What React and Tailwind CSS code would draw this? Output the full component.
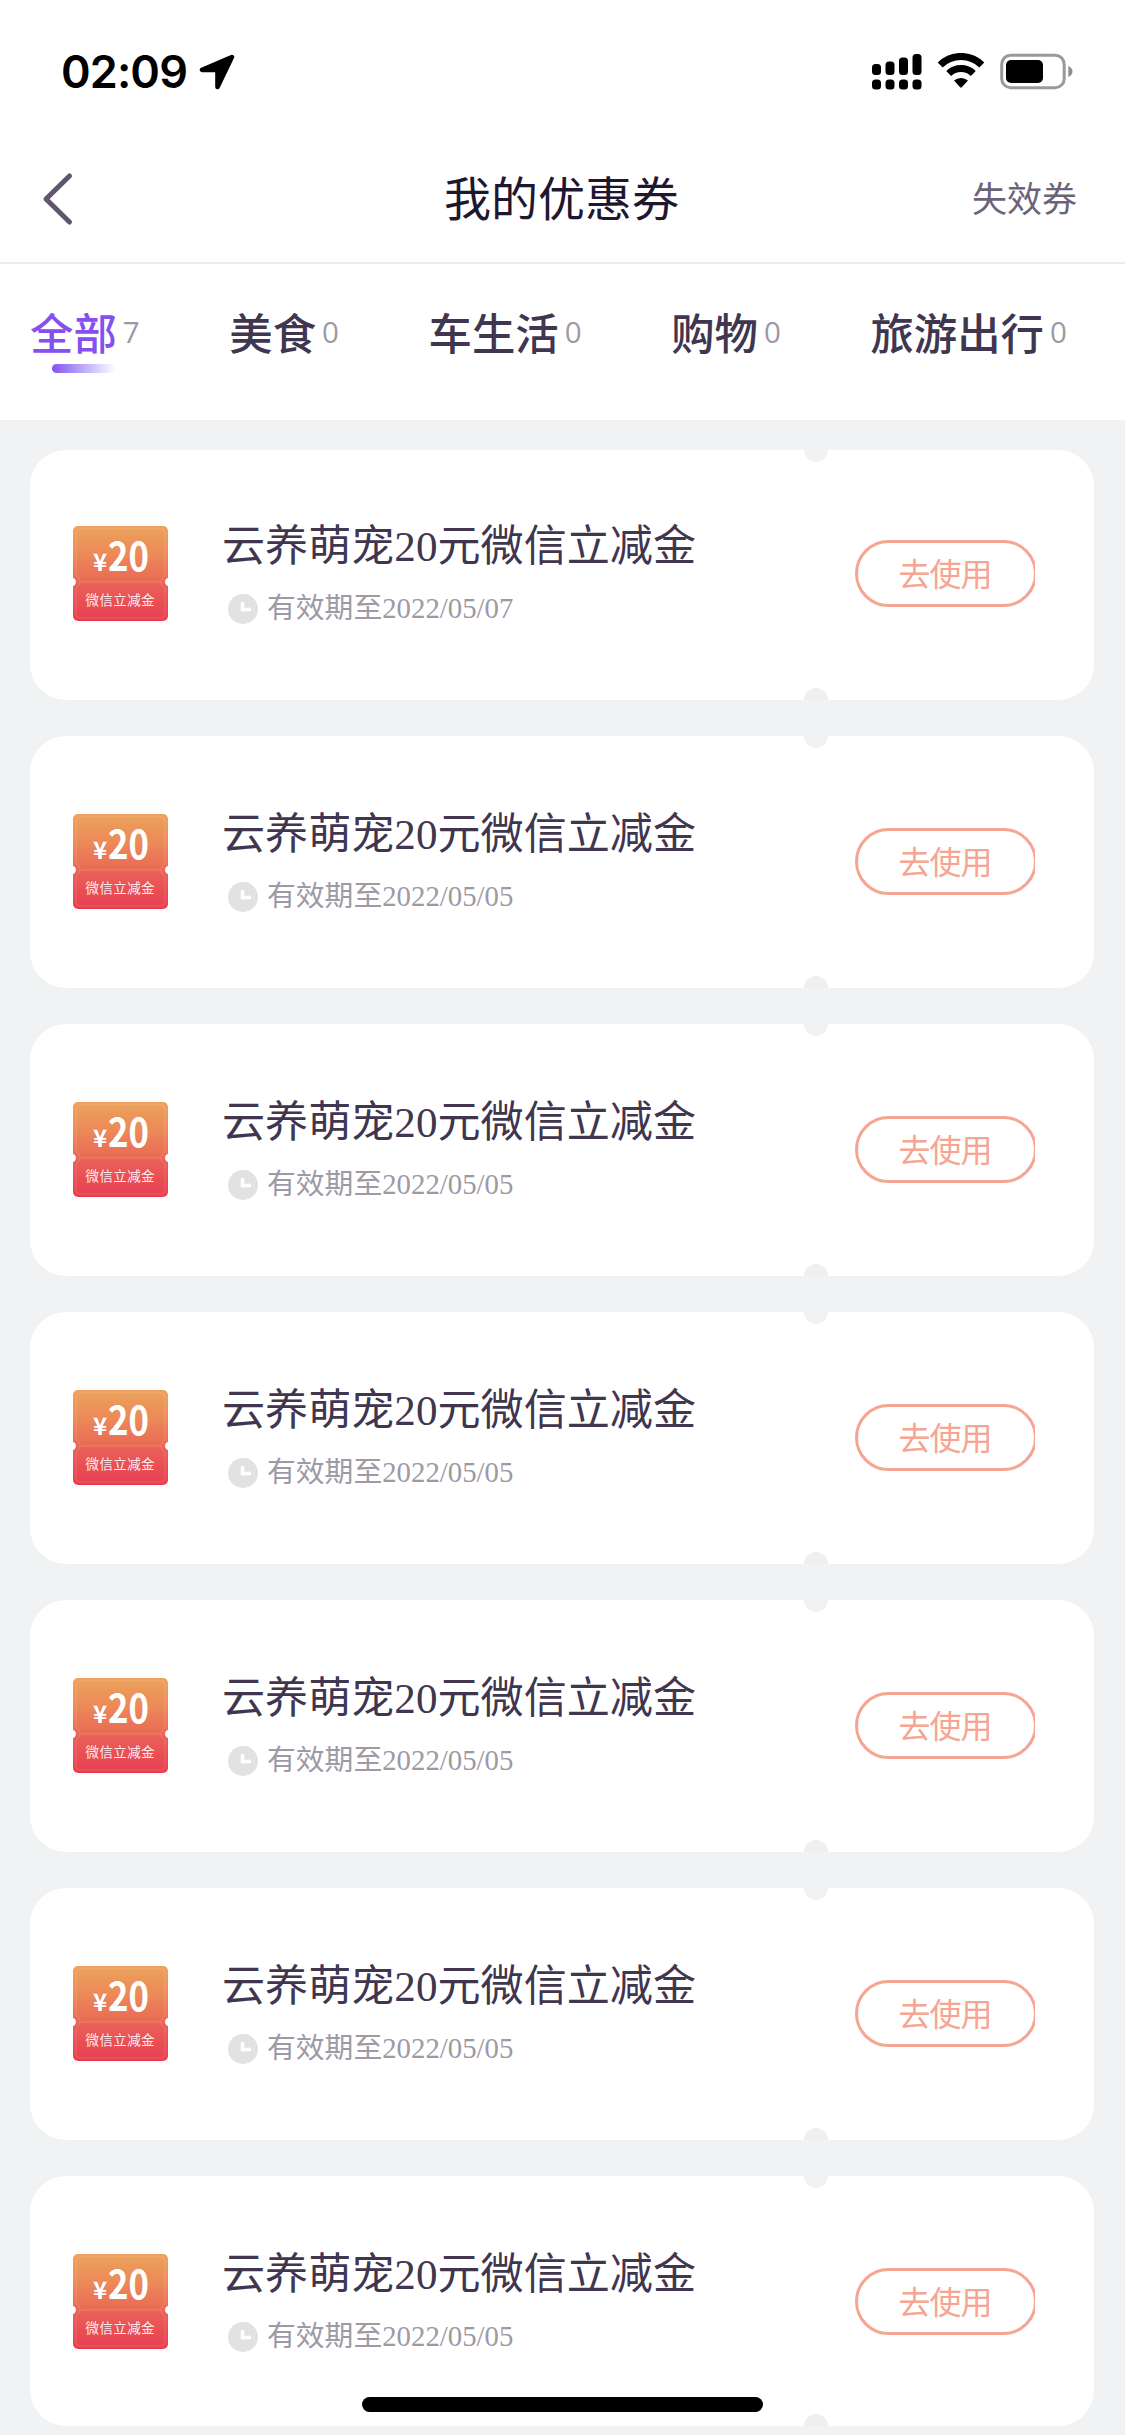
const tabs = [
  { label: '全部', count: 7, active: true },
  { label: '美食', count: 0 },
  { label: '车生活', count: 0 },
  { label: '购物', count: 0 },
  { label: '旅游出行', count: 0 },
]

const coupons = [
  { id: 1, expires: '2022/05/07' },
  { id: 2, expires: '2022/05/05' },
  { id: 3, expires: '2022/05/05' },
  { id: 4, expires: '2022/05/05' },
  { id: 5, expires: '2022/05/05' },
  { id: 6, expires: '2022/05/05' },
  { id: 7, expires: '2022/05/05' },
]

function StatusBar() {
  return (
    <div className="h-[136px] pl-[61px] pr-[52px] pt-[43px] flex items-start justify-between">
      <div className="flex items-center h-[57px]">
        <span className="font-['Inter',sans-serif] font-semibold text-[45px] leading-[57px] tracking-[-0.9px] text-black w-[138px] whitespace-nowrap">02:09</span>
        <svg width="36" height="36" viewBox="0 0 35 35" className="block">
          <path d="M32 3 L3 15.5 H18 V32 Z" fill="#000" stroke="#000" strokeWidth="4.5" strokeLinejoin="round" />
        </svg>
      </div>
      <div className="flex items-start pt-[10px]">
        <svg width="50" height="37" viewBox="0 0 50 37" className="block">
          <rect x="0" y="11" width="9" height="11" rx="3.5" />
          <rect x="13.5" y="8.5" width="9" height="13.5" rx="3.5" />
          <rect x="27" y="4.5" width="9" height="17.5" rx="3.5" />
          <rect x="40.5" y="1" width="9" height="21" rx="3.5" />
          <rect x="0" y="26.5" width="9" height="10" rx="3.5" />
          <rect x="13.5" y="26.5" width="9" height="10" rx="3.5" />
          <rect x="27" y="26.5" width="9" height="10" rx="3.5" />
          <rect x="40.5" y="26.5" width="9" height="10" rx="3.5" />
        </svg>
        <svg width="48" height="36" viewBox="0 0 48 36" className="block ml-[15px]">
          <path d="M3.2 12 A29.5 29.5 0 0 1 44.8 12" fill="none" stroke="#000" strokeWidth="7" />
          <path d="M11.7 20.5 A17.8 17.8 0 0 1 36.3 20.5" fill="none" stroke="#000" strokeWidth="7" />
          <path d="M17 27.6 A10.5 10.5 0 0 1 31 27.6 L24.8 34.3 Q24 35 23.2 34.3 Z" />
        </svg>
        <svg width="73" height="37" viewBox="0 0 73 37" className="block ml-[15px]">
          <rect x="1.7" y="2.2" width="62.5" height="32.5" rx="9" fill="none" stroke="#999" strokeWidth="3" />
          <rect x="6" y="7" width="37" height="23" rx="5" />
          <path d="M68.3 13 Q72.5 15 72.5 18.5 Q72.5 22 68.3 24 Z" fill="#8d8d8d" />
        </svg>
      </div>
    </div>
  )
}

function Header() {
  return (
    <div className="h-[128px] border-b-2 border-[#ececee] flex items-center justify-between pl-[42px] pr-[48px]">
      <svg width="32" height="54" viewBox="0 0 32 54" className="block">
        <path d="M27.5 4 L4 27 L27.5 50" fill="none" stroke="#5f566e" strokeWidth="5" strokeLinecap="round" strokeLinejoin="round" />
      </svg>
      <h1 className="text-[47px] leading-[60px] text-[#1f1730] pl-[77px] pb-[6px]">我的优惠券</h1>
      <span className="text-[35px] leading-[50px] text-[#6b6378] pb-[4px]">失效券</span>
    </div>
  )
}

function Tabs() {
  return (
    <div className="h-[156px] pt-[36px] pl-[30px] flex gap-[89.6px]">
      {tabs.map((tab) => (
        <div key={tab.label} className="relative flex items-center gap-[6px] h-[62px] whitespace-nowrap">
          <span className={`text-[43.4px] font-medium leading-[62px] ${tab.active ? 'text-[#8550ee]' : 'text-[#40364f]'}`}>{tab.label}</span>
          <span className="font-['Open_Sans',sans-serif] text-[29.5px] leading-[60px] text-[#9d9aa6] pt-[2px]">{tab.count}</span>
          {tab.active && (
            <div className="absolute left-[22px] top-[64px] w-[64px] h-[9px] rounded-full bg-gradient-to-r from-[#8550ee] to-white" />
          )}
        </div>
      ))}
    </div>
  )
}

function CouponIcon() {
  return (
    <svg width="95" height="95" viewBox="0 0 95 95" className="block shrink-0">
      <defs>
        <linearGradient id="ticket" x1="0" y1="0" x2="0" y2="1">
          <stop offset="0" stopColor="#eda25a" />
          <stop offset="0.3" stopColor="#ec8a58" />
          <stop offset="0.58" stopColor="#e96a55" />
          <stop offset="0.62" stopColor="#e95f57" />
          <stop offset="1" stopColor="#e93e52" />
        </linearGradient>
      </defs>
      <path d="M5 0 H90 A5 5 0 0 1 95 5 V52 A4.2 4.2 0 0 0 95 60 V90 A5 5 0 0 1 90 95 H5 A5 5 0 0 1 0 90 V60 A4.2 4.2 0 0 0 0 52 V5 A5 5 0 0 1 5 0 Z" fill="url(#ticket)" />
      <path d="M7 3 H88 Q92 3 92 7 V50 Q88 52 88 56 Q88 60 92 62 V88 Q92 92 88 92 H7 Q3 92 3 88 V62 Q7 60 7 56 Q7 52 3 50 V7 Q3 3 7 3 Z M7 56 H88" fill="none" stroke="#fff" strokeOpacity="0.15" strokeWidth="1" />
      <text x="20" y="45" fontSize="24" fontWeight="700" fill="#fff">¥</text>
      <text x="35" y="45" fontSize="40" fontWeight="700" fill="#fff" textLength="41" lengthAdjust="spacingAndGlyphs">20</text>
      <text x="12.5" y="79" fontSize="13.5" fill="#fff" fillOpacity="0.9" textLength="69">微信立减金</text>
    </svg>
  )
}

function ClockIcon() {
  return (
    <svg width="30" height="30" viewBox="0 0 30 30" className="block">
      <circle cx="15" cy="15" r="15" fill="#e2e2e5" />
      <path d="M14.5 8 V15.5 H23" fill="none" stroke="#fff" strokeWidth="3.4" />
    </svg>
  )
}

function CouponCard({ coupon }) {
  return (
    <div className="relative h-[252px] first:h-[250px] last:h-[250px] first:[&>.body]:-mt-[2px] rounded-[36px] bg-white overflow-hidden shrink-0">
      <div className="absolute left-[774px] top-[-12px] w-6 h-6 rounded-full bg-[#f0f2f4]" />
      <div className="absolute left-[774px] bottom-[-12px] w-6 h-6 rounded-full bg-[#edeff1]" />
      <div className="body flex items-start">
        <div className="pl-[43px] pt-[78px]">
          <CouponIcon />
        </div>
        <div className="pl-[54px] pt-[68px] w-[687px]">
          <h2 className="font-['Liberation_Serif','Noto_Sans_CJK_SC',serif] text-[43.1px] leading-[62px] text-[#40364f] whitespace-nowrap">云养萌宠20元微信立减金</h2>
          <div className="flex items-center pl-[6px] mt-[9px] h-[44px]">
            <ClockIcon />
            <span className="font-['Liberation_Serif','Noto_Sans_CJK_SC',serif] text-[28.8px] leading-[43px] text-[#9d9aa6] ml-[9px] pb-[1px] whitespace-nowrap">有效期至{coupon.expires}</span>
          </div>
        </div>
        <div className="mt-[92px] w-[180px] overflow-hidden">
          <button className="w-[182px] h-[67px] rounded-full border-[3px] border-[#f5a592] text-[#f5a592] text-[32px] leading-[58px] tracking-[-1px] pb-[3px] pr-[2px] flex items-center justify-center">去使用</button>
        </div>
      </div>
    </div>
  )
}

export default function App() {
  return (
    <div className="relative w-[1125px] h-[2435px] overflow-hidden bg-[#f0f2f4] font-['Noto_Sans_CJK_SC',sans-serif]">
      <div className="bg-white">
        <StatusBar />
        <Header />
        <Tabs />
      </div>
      <div className="flex flex-col gap-9 pt-[30px] pl-[30px] pr-[31px]">
        {coupons.map((coupon) => (
          <CouponCard key={coupon.id} coupon={coupon} />
        ))}
      </div>
      <div className="absolute left-[362px] top-[2397px] w-[401px] h-[15px] rounded-full bg-black" />
    </div>
  )
}
